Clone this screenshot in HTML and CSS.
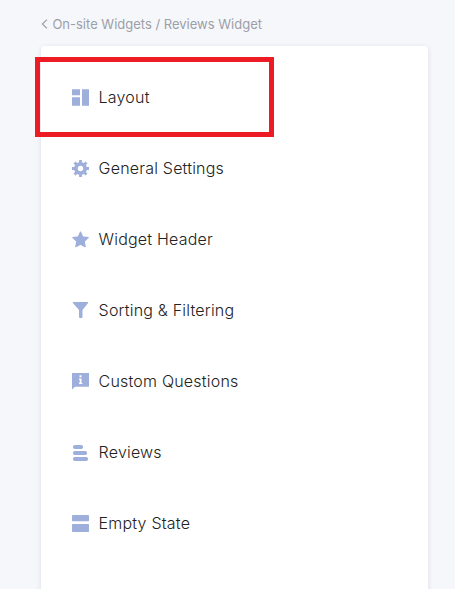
FILE: index.html
```
<!DOCTYPE html>
<html lang="en">
<head>
<meta charset="utf-8">
<title>Reviews Widget</title>
<link rel="stylesheet" href="styles.css">
</head>
<body>
<nav class="crumbs">
  <svg class="back" viewBox="0 0 7 10"><path d="M6 .6 1.400 5 6 9.400"/></svg>
  <span>On-site Widgets / Reviews Widget</span>
</nav>
<main class="card">
  <ul class="menu">
    <li class="item selected"><svg class="icon" viewBox="0 0 17 17"><path d="M0 .3h8v6H0zM0 8.300h8v8.400H0zM10 .3h7v16.400h-7z"/></svg><span>Layout</span></li>
    <li class="item"><svg class="icon gear" viewBox="0 0 17 17"><circle class="ring" cx="8.500" cy="8.500" r="4.600"/><path class="teeth" d="M8.500 3V0M8.500 14v3M3 8.500H0M14 8.500h3M4.600 4.600 2.500 2.500M12.400 4.600l2.100-2.100M4.600 12.400l-2.100 2.100M12.400 12.400l2.100 2.100"/></svg><span>General Settings</span></li>
    <li class="item"><svg class="icon round" viewBox="0 0 17 17"><path d="m8.500 1 2.300 4.900 5.400.7-4 3.700 1 5.400-4.700-2.600-4.700 2.600 1-5.400-4-3.700 5.400-.7z"/></svg><span>Widget Header</span></li>
    <li class="item"><svg class="icon" viewBox="0 0 17 17"><path d="M1.500 0h14c.7 0 .8.700.4 1.200L10.500 8v7c0 .6-.3 1-.9 1H7.900c-.6 0-.9-.4-.9-1V8L1.100 1.200C.7.700.8 0 1.500 0z"/></svg><span>Sorting &amp; Filtering</span></li>
    <li class="item"><svg class="icon" viewBox="0 0 17 17"><path d="M0 0h17v13.700H3L0 16.500z"/><path class="cut" d="M7.500 2.300h2v2h-2zM7 5.500h2.500v4.200h.8V11H7V9.700h.7V6.700H7z"/></svg><span>Custom Questions</span></li>
    <li class="item"><svg class="icon" viewBox="0 0 17 17"><rect x="1" y="1" width="10" height="4" rx="1.700"/><rect x="1" y="7" width="14" height="4" rx="1.700"/><rect x="1" y="13" width="15" height="4" rx="1.700"/></svg><span>Reviews</span></li>
    <li class="item"><svg class="icon" viewBox="0 0 17 17"><rect width="17" height="6.200" rx=".8"/><rect y="9" width="17" height="8" rx=".8"/></svg><span>Empty State</span></li>
  </ul>
</main>
</body>
</html>
```
FILE: styles.css
```
* { box-sizing: border-box; }
body {
  margin: 0;
  height: 589px;
  overflow: hidden;
  background: #f5f7fb;
  font-family: Inter, "Liberation Sans", sans-serif;
  color: #222;
}
.crumbs {
  display: flex;
  align-items: center;
  height: 46px;
  padding: 2px 0 0 41px;
  gap: 4.4px;
  font-size: 13px;
  color: #9c9fa8;
}
.back {
  width: 7px;
  height: 10px;
  fill: none;
  stroke: #9c9fa8;
  stroke-width: 1.2;
}
.card {
  width: 387px;
  height: 560px;
  margin-left: 41px;
  padding-top: 16px;
  background: #fff;
  border-radius: 4px;
  box-shadow: 0 1px 5px rgba(40, 50, 80, .12);
}
.menu { margin: 0; padding: 0; list-style: none; }
.item {
  position: relative;
  display: flex;
  align-items: center;
  height: 71px;
  padding-left: 31px;
  gap: 9.6px;
  font-size: 16px;
  font-weight: 300;
  letter-spacing: .2px;
}
.item span { padding-bottom: 2px; }
.icon { width: 17px; height: 17px; fill: #9fafdc; }
.gear { fill: none; stroke: #9fafdc; }
.ring { stroke-width: 3.8; }
.teeth { stroke-width: 2.8; }
.round { stroke: #9fafdc; stroke-width: 1.2; stroke-linejoin: round; }
.cut { fill: #fff; }
.selected::after {
  content: "";
  box-sizing: border-box;
  position: absolute;
  left: -6px;
  top: -5px;
  width: 239px;
  height: 80px;
  border: 5px solid #ed1c24;
}
```
